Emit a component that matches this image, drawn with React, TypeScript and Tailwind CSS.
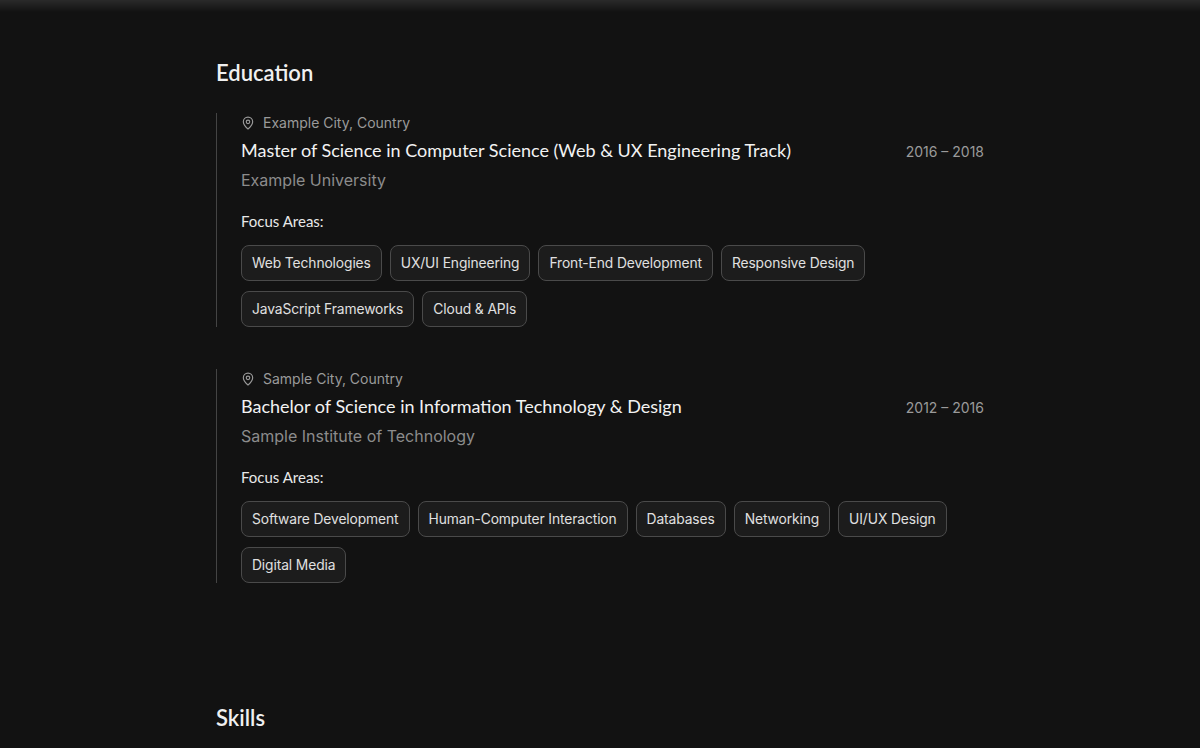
import React from "react";

const Pin = () => (
  <svg width="14" height="14" viewBox="0 0 24 24" fill="none" stroke="currentColor" strokeWidth="2" strokeLinecap="round" strokeLinejoin="round">
    <path d="M20 10c0 5-5.5 10.2-7.4 11.8a1 1 0 0 1-1.2 0C9.5 20.2 4 15 4 10a8 8 0 0 1 16 0" />
    <circle cx="12" cy="10" r="3" />
  </svg>
);

const entries = [
  {
    loc: "Example City, Country",
    title: "Master of Science in Computer Science (Web & UX Engineering Track)",
    school: "Example University",
    years: "2016 – 2018",
    tags: ["Web Technologies", "UX/UI Engineering", "Front-End Development", "Responsive Design", "JavaScript Frameworks", "Cloud & APIs"],
  },
  {
    loc: "Sample City, Country",
    title: "Bachelor of Science in Information Technology & Design",
    school: "Sample Institute of Technology",
    years: "2012 – 2016",
    tags: ["Software Development", "Human-Computer Interaction", "Databases", "Networking", "UI/UX Design", "Digital Media"],
  },
];

export default function App() {
  return (
    <div className="relative min-h-[748px] bg-[#121212] text-white overflow-hidden" style={{ fontFamily: "Inter, sans-serif" }}>
      <div className="absolute top-0 left-0 right-0 h-[12px] bg-gradient-to-b from-[#2a2a2a] to-transparent" />
      <div className="w-[768px] mx-auto pt-[58px]">
        <h2 className="text-[22px] font-semibold leading-[30px] text-[#f0f0f0]" style={{ fontFamily: "Lato, sans-serif" }}>Education</h2>
        <div className="mt-[25px] flex flex-col gap-[42px]">
          {entries.map((e) => (
            <div key={e.title} className="border-l border-[#444] pl-[24px]">
              <div className="flex items-center gap-[8px] text-[14px] text-[#9a9a9a] leading-[18px] mt-[1px]">
                <Pin />
                <span>{e.loc}</span>
              </div>
              <div className="flex justify-between items-baseline mt-[6px]">
                <div className="text-[18px] leading-[24px] text-[#f2f2f2]" style={{ fontFamily: "Lato, sans-serif" }}>{e.title}</div>
                <div className="text-[14px] text-[#9a9a9a]">{e.years}</div>
              </div>
              <div className="text-[16px] leading-[22px] text-[#8c8c8c] mt-[7px]">{e.school}</div>
              <div className="text-[15px] leading-[20px] text-[#e8e8e8] mt-[20px]" style={{ fontFamily: "Lato, sans-serif" }}>Focus Areas:</div>
              <div className="flex flex-wrap gap-x-[8px] gap-y-[10px] mt-[14px]">
                {e.tags.map((t) => (
                  <span key={t} className="h-[36px] flex items-center px-[10px] rounded-[8px] border border-[#4a4a4a] bg-[#1c1c1c] text-[13.8px] tracking-[-0.1px] text-[#e0e0e0]">{t}</span>
                ))}
              </div>
            </div>
          ))}
        </div>
        <h2 className="mt-[120px] text-[22px] font-semibold leading-[30px] text-[#f0f0f0]" style={{ fontFamily: "Lato, sans-serif" }}>Skills</h2>
      </div>
    </div>
  );
}
